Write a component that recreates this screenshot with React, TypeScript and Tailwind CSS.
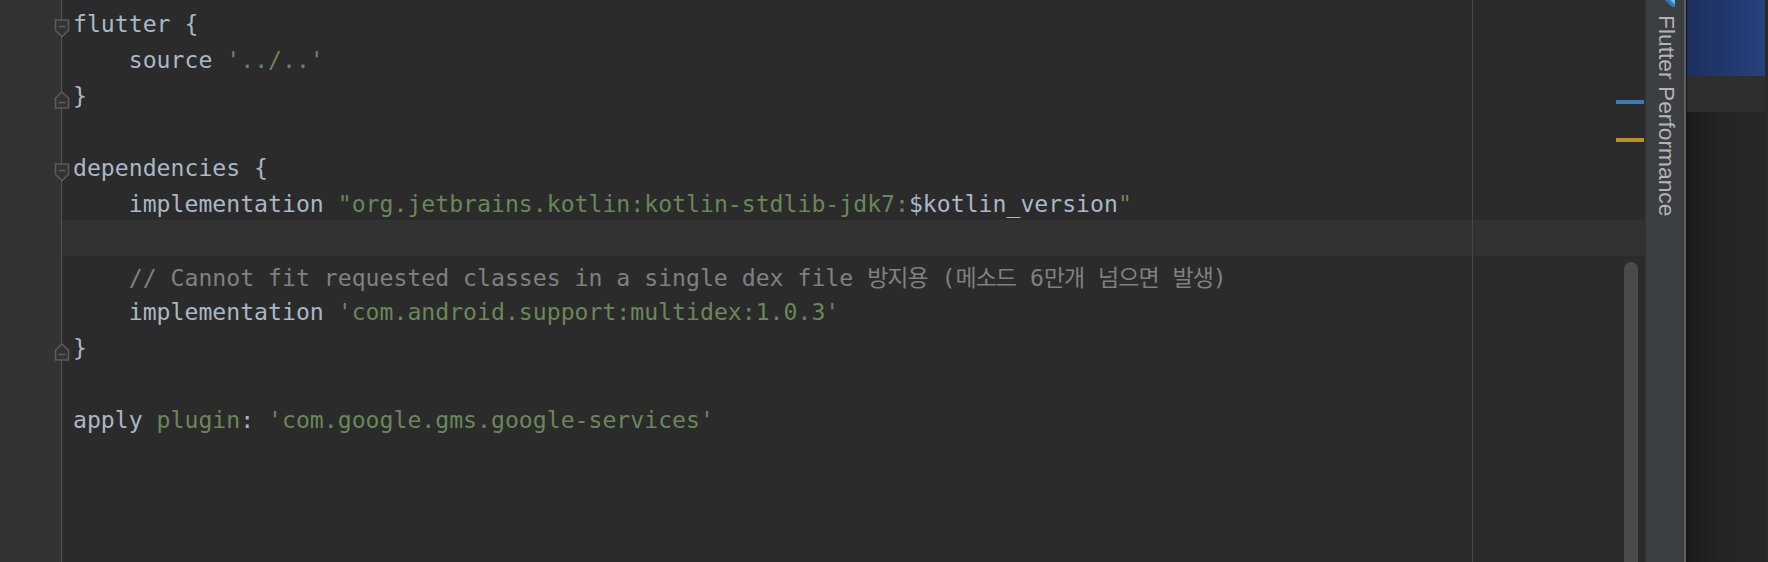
import React from 'react';

const G = 'text-[#6a8759]';
const C = 'text-[#808080]';

type Seg = { t: string; c?: string; ko?: boolean };
type Line = { segs: Seg[]; fold?: 'open' | 'close'; current?: boolean };

const LINES: Line[] = [
  { segs: [{ t: 'flutter {' }], fold: 'open' },
  { segs: [{ t: '    source ' }, { t: "'../..'", c: G }] },
  { segs: [{ t: '}' }], fold: 'close' },
  { segs: [] },
  { segs: [{ t: 'dependencies {' }], fold: 'open' },
  {
    segs: [
      { t: '    implementation ' },
      { t: '"org.jetbrains.kotlin:kotlin-stdlib-jdk7:', c: G },
      { t: '$kotlin_version' },
      { t: '"', c: G },
    ],
  },
  { segs: [], current: true },
  {
    segs: [
      { t: '    // Cannot fit requested classes in a single dex file ', c: C },
      { t: '방지용', c: C, ko: true },
      { t: ' (', c: C },
      { t: '메소드', c: C, ko: true },
      { t: ' 6', c: C },
      { t: '만개', c: C, ko: true },
      { t: ' ', c: C },
      { t: '넘으면', c: C, ko: true },
      { t: ' ', c: C },
      { t: '발생', c: C, ko: true },
      { t: ')', c: C },
    ],
  },
  { segs: [{ t: '    implementation ' }, { t: "'com.android.support:multidex:1.0.3'", c: G }] },
  { segs: [{ t: '}' }], fold: 'close' },
  { segs: [] },
  {
    segs: [
      { t: 'apply ' },
      { t: 'plugin', c: G },
      { t: ': ' },
      { t: "'com.google.gms.google-services'", c: G },
    ],
  },
];

function FoldMarker({ kind }: { kind: 'open' | 'close' }) {
  return (
    <svg
      className="absolute left-[54px] top-[15px]"
      width="16"
      height="19"
      viewBox="0 0 16 19"
      fill="#313335"
      stroke="#5c5c5c"
      strokeWidth="1.5"
    >
      {kind === 'open' ? (
        <>
          <path d="M1.5 1 H14.5 V11.5 L8 17.5 L1.5 11.5 Z" />
          <path d="M4.5 7.5 H11.5" fill="none" />
        </>
      ) : (
        <>
          <path d="M1.5 17 H14.5 V7 L8 1 L1.5 7 Z" />
          <path d="M4.5 11.5 H11.5" fill="none" />
        </>
      )}
    </svg>
  );
}

function Editor() {
  return (
    <div className="relative flex h-full w-[1645px] shrink-0 bg-[#2b2b2b]">
      {/* gutter */}
      <div className="relative w-[62px] shrink-0 border-r border-[#555555] bg-[#313335] pt-[4px]">
        {LINES.map((line, i) => (
          <div key={i} className="relative h-[36px]">
            {line.fold && <FoldMarker kind={line.fold} />}
          </div>
        ))}
      </div>

      {/* code */}
      <div className="flex-1 pt-[4px] font-['DejaVu_Sans_Mono','Noto_Sans_CJK_KR',monospace] text-[23.15px] text-[#a9b7c6]">
        {LINES.map((line, i) => (
          <div
            key={i}
            className={`h-[36px] whitespace-pre pl-[11px] leading-[36px] ${line.current ? 'bg-[#323232]' : ''}`}
          >
            <span className="relative top-[2px]">
              {line.segs.map((s, j) => (
                <span
                  key={j}
                  className={`${s.c ?? ''} ${s.ko ? "font-['Noto_Sans_CJK_KR',sans-serif] text-[23px] tracking-[-1px]" : ''}`}
                >
                  {s.t}
                </span>
              ))}
            </span>
          </div>
        ))}
      </div>

      {/* right margin guide */}
      <div className="absolute bottom-0 left-[1472px] top-0 w-px bg-[#464646]" />

      {/* error stripe marks */}
      <div className="absolute left-[1616px] top-[100px] h-[4px] w-[28px] bg-[#3d7bb2]" />
      <div className="absolute left-[1616px] top-[138px] h-[4px] w-[28px] bg-[#b9922e]" />

      {/* scrollbar thumb */}
      <div className="absolute left-[1624px] top-[262px] h-[330px] w-[14px] rounded-full bg-[#4b4b4b]" />
    </div>
  );
}

function ToolStripe() {
  return (
    <div className="relative flex h-full w-[39px] shrink-0 flex-col items-center border-l border-[#323435] bg-[#3c3f41]">
      <svg className="absolute left-[16px] top-0" width="14" height="7" viewBox="0 0 14 7">
        <polygon points="3,0 8,0 13,5 13,7 10,7" fill="#2d79c7" />
        <polygon points="8,0 13,0 13,5" fill="#5bc0f0" />
      </svg>
      <span className="mt-[15px] pl-[2px] font-['Liberation_Sans',Arial,sans-serif] text-[22.8px] leading-[23px] text-[#b4b4b4] [writing-mode:vertical-rl]">
        Flutter Performance
      </span>
    </div>
  );
}

function SidePanel() {
  return (
    <div className="flex h-full w-[81px] shrink-0 flex-col border-l-2 border-[#5f6161]">
      <div className="flex h-full flex-col border-l border-[#131313]">
        <div className="h-[76px] bg-linear-to-r from-[#1c2f5d] to-[#27427f]" />
        <div className="h-[36px] bg-[#2e2e2e]" />
        <div className="flex-1 bg-linear-to-r from-[#1b1b1b] via-[#252525] to-[#272727]" />
      </div>
    </div>
  );
}

export default function App() {
  return (
    <div className="flex h-[562px] w-[1768px] overflow-hidden bg-[#2b2b2b]">
      <Editor />
      <ToolStripe />
      <SidePanel />
    </div>
  );
}
